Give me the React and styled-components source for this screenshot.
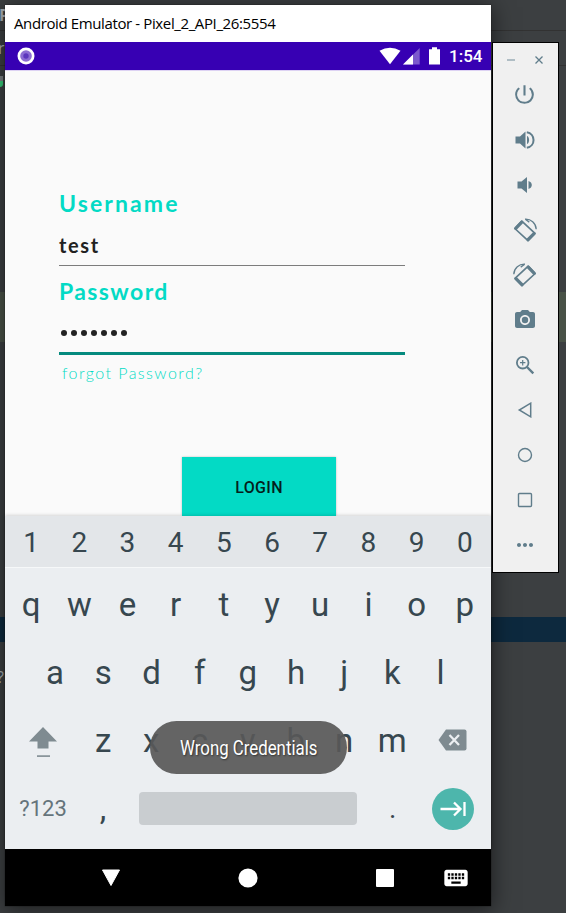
import React from 'react';
import styled, { createGlobalStyle } from 'styled-components';
import {
  MdPowerSettingsNew, MdCameraAlt, MdMoreHoriz, MdKeyboard,
} from 'react-icons/md';

const Global = createGlobalStyle`
  * { box-sizing: border-box; }
  html, body { margin: 0; height: 100%; overflow: hidden; }
  svg { display: block; flex: none; }
`;

const Desktop = styled.div`
  position: relative;
  width: 566px;
  height: 913px;
  overflow: hidden;
  background: #3c3f41;
  font-family: Roboto, sans-serif;
  display: flex;
  flex-direction: column;
`;

const Strip = styled.div`
  flex: none;
  height: ${p => p.$h}px;
  background: ${p => p.$bg || 'transparent'};
  border-bottom: ${p => (p.$line ? '1px solid #323232' : '0')};
  color: #a9b0b4;
  font: ${p => p.$weight || 400} 16px/${p => p.$h}px "Open Sans", sans-serif;
  overflow: hidden;
  white-space: nowrap;
  text-indent: ${p => p.$shift || 0}px;
`;

const StatusDot = styled.div`
  width: 6px;
  height: 11px;
  margin: 10px 0 0 -3px;
  border-top: 5px solid #7b8083;
  border-radius: 0 0 3px 3px;
  background: #35c977;
`;

const Phone = styled.section`
  position: absolute;
  left: 5px;
  top: 5px;
  width: 486px;
  height: 901px;
  display: flex;
  flex-direction: column;
  background: #fafafa;
  box-shadow: 0 0 1px #111, 1px 3px 20px 1px rgba(0, 0, 0, 0.5);
`;

const TitleBar = styled.header`
  height: 37px;
  flex: none;
  padding-left: 9px;
  background: #fff;
  color: #000;
  font: 15px/37px "Open Sans", sans-serif;
  letter-spacing: -0.38px;
  white-space: nowrap;
`;

const StatusBar = styled.div`
  height: 28px;
  flex: none;
  padding: 0 9px 0 12px;
  display: flex;
  align-items: center;
  background: #3700b3;
  color: #fff;
`;

const StatusIcons = styled.div`
  margin-left: auto;
  display: flex;
  align-items: center;
`;

const Clock = styled.span`
  width: 33px;
  margin-left: 5px;
  font: 500 17px/32px Roboto, sans-serif;
  white-space: nowrap;
`;

const LoginScreen = styled.main`
  height: 446px;
  flex: none;
  display: flex;
  flex-direction: column;
  border-top: 1px solid #ddd2f3;
  padding: 118px 86px 0 54px;
  font-family: Lato, sans-serif;
`;

const Label = styled.label`
  height: 28px;
  font-size: 23px;
  line-height: 28px;
  font-weight: 700;
  letter-spacing: ${p => p.$track}px;
  color: #03dac5;
`;

const Field = styled.div`
  height: ${p => p.$h}px;
  margin-bottom: ${p => p.$gap}px;
  border-bottom: ${p => (p.$focused ? '3px solid #058a7e' : '1px solid #7c7c7c')};
  color: #212121;
  font-size: 20px;
  line-height: 28px;
  font-weight: 700;
  letter-spacing: 1.6px;
  padding-top: 14px;
`;

const Dots = styled.div`
  display: flex;
  gap: 4px;
  padding: 11px 0 0 2px;
`;

const Dot = styled.i`
  width: 6px;
  height: 6px;
  border-radius: 50%;
  background: #212121;
`;

const Forgot = styled.a`
  height: 24px;
  padding-left: 3px;
  font-size: 16px;
  line-height: 24px;
  font-weight: 300;
  letter-spacing: 1.45px;
  color: #03dac5;
  white-space: nowrap;
`;

const LoginButton = styled.button`
  width: 154px;
  height: 59px;
  margin: auto 0 0 123px;
  flex: none;
  border: 0;
  padding: 2px 0 0;
  background: #03dac5;
  color: #041f1c;
  font: 500 16px Roboto, sans-serif;
  letter-spacing: 0.35px;
  box-shadow: 0 0 2px rgba(0, 0, 0, 0.25);
`;

const Keyboard = styled.div`
  height: 333px;
  flex: none;
  position: relative;
  display: flex;
  flex-direction: column;
  background: #ebeef1;
  color: #37474f;
  box-shadow: 0 -1px 3px rgba(0, 0, 0, 0.15);
`;

const KeyRow = styled.div`
  height: ${p => p.$h}px;
  flex: none;
  display: flex;
  align-items: center;
  padding: 0 ${p => p.$side}px;
  background: ${p => (p.$numbers ? '#e3e6e9' : 'transparent')};
  border-bottom: ${p => (p.$numbers ? '1px solid #f6f8f9' : '0')};
  font-size: ${p => (p.$numbers ? 28 : 33)}px;
`;

const Key = styled.span`
  width: ${p => p.$w || 48.2}px;
  flex: none;
  display: flex;
  justify-content: center;
  line-height: 40px;
  padding-top: ${p => p.$drop || 0}px;
  font-size: ${p => (p.$size ? p.$size + 'px' : 'inherit')};
  color: ${p => p.$color || 'inherit'};
`;

const SpaceBar = styled.div`
  width: 218px;
  height: 33px;
  margin: 2px 0 0 12px;
  border-radius: 4px;
  background: #c9cdd0;
  flex: none;
`;

const EnterKey = styled.div`
  width: 42px;
  height: 42px;
  margin: 2px 0 0 4px;
  border-radius: 50%;
  background: #4db6ac;
  color: #fff;
  display: grid;
  place-items: center;
`;

const Toast = styled.div`
  position: absolute;
  left: 145px;
  top: 205px;
  width: 197px;
  height: 53px;
  padding-top: 1px;
  border-radius: 27px;
  background: rgba(88, 88, 88, 0.92);
  color: #fff;
  display: grid;
  place-items: center;
`;

const ToastText = styled.span`
  font-size: 20.5px;
  white-space: nowrap;
  transform: scaleX(0.82);
  text-shadow: 1px 1px 2px rgba(0, 0, 0, 0.5);
`;

const NavBar = styled.nav`
  height: 57px;
  flex: none;
  background: #000;
  color: #fff;
  display: flex;
  align-items: center;
  padding-left: 96px;
`;

const NavItem = styled.span`
  display: flex;
  width: ${p => p.$w}px;
`;

const ToolPanel = styled.aside`
  position: absolute;
  left: 492px;
  top: 42px;
  width: 67px;
  height: 531px;
  border: 1px solid #000;
  background: #f0f0f0;
  color: #607d8b;
  display: flex;
  flex-direction: column;
`;

const PanelControls = styled.div`
  height: 29px;
  display: flex;
  padding: 12px 14px 0 13px;
  justify-content: space-between;
`;

const Tool = styled.div`
  height: 45px;
  flex: none;
  display: grid;
  place-items: center;
  padding-right: 2px;
`;

function RotateIcon({ right }) {
  return (
    <svg width="24" height="24" viewBox="0 0 24 24" fill="none" stroke="currentColor">
      <g transform={right ? 'matrix(-1 0 0 1 24 0)' : undefined}>
        <path d="M1.8 10.5 8.8 3.2 22 15.4 15 22.7Z" strokeWidth="1.7" strokeLinejoin="round" />
        <path d="M2.8 10.3 8.8 4.2M21 15.6 15 21.7" strokeWidth="3.2" strokeLinecap="round" />
        <path d="M12 1.2c5.8-.4 11 4 11.2 10M12.6 1.5l3.7 2.6" strokeWidth="1.3" />
      </g>
    </svg>
  );
}

const tools = [
  <MdPowerSettingsNew size={25} />,
  <svg width="22" height="22" viewBox="0 0 22 22" fill="currentColor">
    <path d="M1.5 7.5H6L11.5 2.5V19.5L6 14.5H1.5Z" />
    <path d="M13 7c2.8 1 2.8 7 0 8Z" />
    <path d="M12.8 3.2c9 1.5 9 14.1 0 15.6" fill="none" stroke="currentColor" strokeWidth="2" />
  </svg>,
  <svg width="22" height="22" viewBox="0 0 22 22" fill="currentColor">
    <path d="M3.5 7.5H7.5L13 3V19L7.5 14.5H3.5Z" />
    <path d="M14.5 7c4.4 1.2 4.4 6.8 0 8Z" />
  </svg>,
  <RotateIcon />,
  <RotateIcon right />,
  <MdCameraAlt size={24} />,
  <svg width="20" height="20" viewBox="0 0 20 20" fill="none" stroke="currentColor">
    <circle cx="7.7" cy="7.7" r="5.8" strokeWidth="1.8" />
    <path d="M12 12l6.3 6.3" strokeWidth="2.4" />
    <path d="M5 7.7h5.4M7.7 5v5.4" strokeWidth="1.2" />
  </svg>,
  <svg width="16" height="16" viewBox="0 0 16 16" fill="none" stroke="currentColor" strokeWidth="1.5">
    <path d="M13.7 1.2V14.8L2.3 8Z" />
  </svg>,
  <svg width="16" height="16" viewBox="0 0 16 16" fill="none" stroke="currentColor" strokeWidth="1.4">
    <circle cx="8" cy="8" r="6.5" />
  </svg>,
  <svg width="16" height="16" viewBox="0 0 16 16" fill="none" stroke="currentColor" strokeWidth="1.4">
    <rect x="1.5" y="1.5" width="13" height="13" rx="1" />
  </svg>,
  <MdMoreHoriz size={24} />,
];

function Keys({ chars, ...rest }) {
  return chars.split('').map(c => <Key key={c} {...rest}>{c}</Key>);
}

export default function App() {
  return (
    <>
      <Global />
      <Desktop>
        <Strip $h={31} $line $weight={700} $shift={-1}>P</Strip>
        <Strip $h={35} $line $shift={-2}>r</Strip>
        <Strip $h={226}><StatusDot /></Strip>
        <Strip $h={50} $bg="#495247" />
        <Strip $h={275} />
        <Strip $h={25} $bg="#0d293e" />
        <Strip $h={70} $shift={-3}>?</Strip>

        <Phone>
          <TitleBar>Android Emulator - Pixel_2_API_26:5554</TitleBar>
          <StatusBar>
            <svg width="18" height="18" viewBox="0 0 18 18">
              <circle cx="9" cy="9" r="8.5" fill="#fff" />
              <circle cx="9" cy="9" r="5.8" fill="#8c6cd3" />
              <circle cx="9" cy="9" r="2.7" fill="#5c36bd" />
            </svg>
            <StatusIcons>
              <svg width="68" height="20" viewBox="0 0 68 20" fill="#fff">
                <path d="M3.5 4.8Q14 -1.2 24.5 4.8L14 18.2Z" />
                <path d="M43.7 2V18.6H27Z" opacity=".35" />
                <path d="M37 8.5V18.6H27Z" />
                <path d="M53 3.3h3V1.3h5v2h3v15.3H53Z" />
              </svg>
              <Clock>1:54</Clock>
            </StatusIcons>
          </StatusBar>

          <LoginScreen>
            <Label $track={2.1}>Username</Label>
            <Field $h={49} $gap={11}>test</Field>
            <Label $track={1.4}>Password</Label>
            <Field $h={50} $gap={6} $focused>
              <Dots>{Array.from({ length: 7 }, (_, i) => <Dot key={i} />)}</Dots>
            </Field>
            <Forgot>forgot Password?</Forgot>
            <LoginButton>LOGIN</LoginButton>
          </LoginScreen>

          <Keyboard>
            <KeyRow $h={52} $side={2} $numbers><Keys chars="1234567890" $drop={3} /></KeyRow>
            <KeyRow $h={70} $side={2}><Keys chars="qwertyuiop" $drop={3} /></KeyRow>
            <KeyRow $h={68} $side={26}><Keys chars="asdfghjkl" $drop={2} /></KeyRow>
            <KeyRow $h={68} $side={2}>
              <Key $w={72} $drop={4} $color="#7f8b91">
                <svg width="28" height="32" viewBox="0 0 28 32" fill="currentColor">
                  <path d="M14 1 28 15.5H19.5V22.5H8.5V15.5H0Z" />
                  <path d="M8 29.3h13v1.6H8Z" />
                </svg>
              </Key>
              <Keys chars="zxcvbnm" $drop={2} />
              <Key $w={72} $color="#7f8b91">
                <svg width="29" height="22" viewBox="0 0 29 22">
                  <path d="M8 .5H26.5Q28.5 .5 28.5 2.5V19.5Q28.5 21.5 26.5 21.5H8L.5 11Z" fill="currentColor" />
                  <path d="M11.5 6 21 16M21 6 11.5 16" stroke="#ebeef1" strokeWidth="2.3" />
                </svg>
              </Key>
            </KeyRow>
            <KeyRow $h={67} $side={2}>
              <Key $w={72} $drop={3} $size={22} $color="#65747b">?123</Key>
              <Key $drop={3}>,</Key>
              <SpaceBar />
              <Key $w={71} $drop={3} $size={28}>.</Key>
              <EnterKey>
                <svg width="28" height="20" viewBox="0 0 28 20" fill="none" stroke="#fff" strokeWidth="2.3">
                  <path d="M1.5 10H21M15 3.5 21.5 10 15 16.5M25.5 3V17" />
                </svg>
              </EnterKey>
            </KeyRow>
            <Toast><ToastText>Wrong Credentials</ToastText></Toast>
          </Keyboard>

          <NavBar>
            <NavItem $w={137}>
              <svg width="20" height="18" viewBox="0 0 20 18"><path d="M1.5 1H18.5L10 16.5Z" fill="#fff" stroke="#fff" strokeLinejoin="round" /></svg>
            </NavItem>
            <NavItem $w={138}>
              <svg width="20" height="20" viewBox="0 0 20 20"><circle cx="10" cy="10" r="9.6" fill="#fff" /></svg>
            </NavItem>
            <NavItem $w={66}>
              <svg width="18" height="18" viewBox="0 0 18 18"><rect width="18" height="18" rx="1" fill="#fff" /></svg>
            </NavItem>
            <NavItem $w={28}><MdKeyboard size={28} /></NavItem>
          </NavBar>
        </Phone>

        <ToolPanel>
          <PanelControls>
            <svg width="10" height="10" viewBox="0 0 10 10"><path d="M1 5h8" stroke="#a3b4bc" strokeWidth="1.7" /></svg>
            <svg width="10" height="10" viewBox="0 0 10 10"><path d="M1.5 1.5l7 7M8.5 1.5l-7 7" stroke="#607d8b" strokeWidth="1.3" /></svg>
          </PanelControls>
          {tools.map((icon, i) => <Tool key={i}>{icon}</Tool>)}
        </ToolPanel>
      </Desktop>
    </>
  );
}
